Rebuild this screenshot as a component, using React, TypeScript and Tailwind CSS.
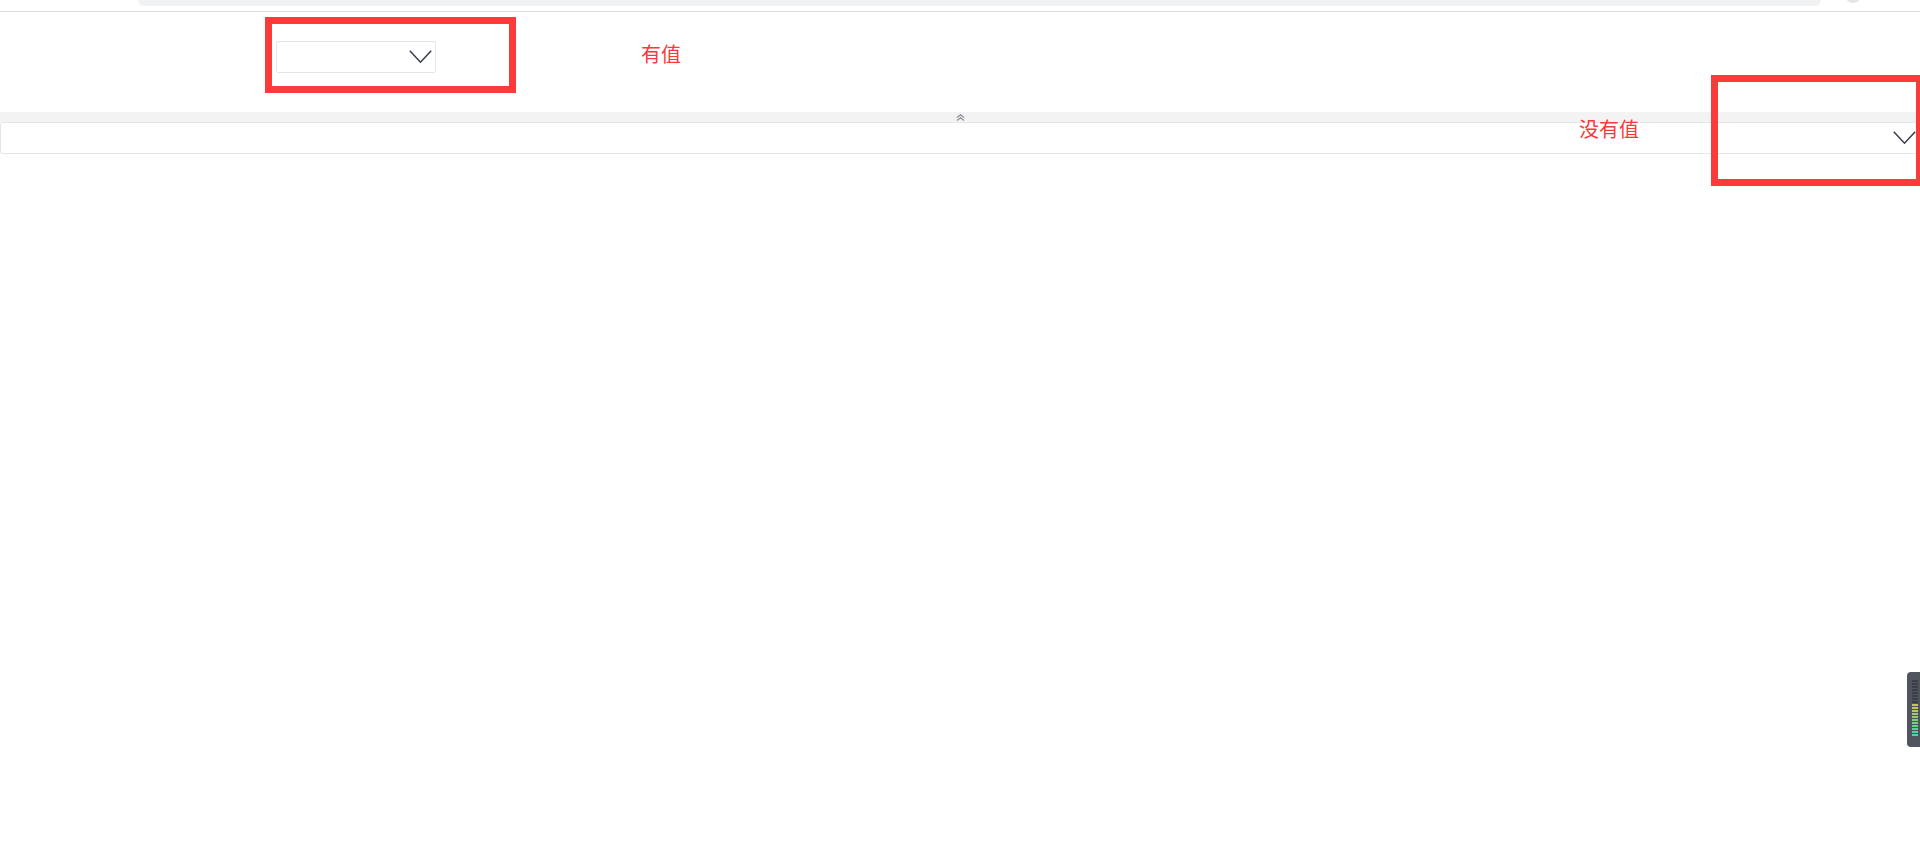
import React from "react";

function Chevron({ className }: { className?: string }) {
  return (
    <svg className={className} width="23" height="14" viewBox="0 0 23 14" fill="none">
      <polyline points="0.8,0.8 11.5,12.2 22.2,0.8" stroke="#3a4050" strokeWidth="1.6" strokeLinejoin="miter" />
    </svg>
  );
}

const bars = [
  "bg-[#3c3f48]", "bg-[#3c3f48]", "bg-[#3c3f48]", "bg-[#3c3f48]", "bg-[#3c3f48]",
  "bg-[#3c3f48]", "bg-[#3c3f48]", "bg-[#3c3f48]", "bg-[#c9c457]", "bg-[#c2c65a]",
  "bg-[#b4c85e]", "bg-[#a5c962]", "bg-[#95ca69]", "bg-[#86cc74]", "bg-[#74cd80]",
  "bg-[#66cf8e]", "bg-[#5ad09c]", "bg-[#50d1a8]", "bg-[#4ad2b2]",
];

export default function App() {
  return (
    <div className="relative min-h-screen w-full overflow-hidden bg-white" style={{ fontFamily: '"Noto Sans CJK SC", "Noto Sans", sans-serif' }}>
      {/* top strip */}
      <div className="flex h-[12px] items-start border-b border-[#dcdddf] pl-[138px]">
        <div className="h-[6px] w-[1683px] rounded-b-[14px] bg-[#f1f2f4]" />
        <div className="-mt-[13px] ml-[24px] h-[16px] w-[16px] rounded-full bg-[#e3e5e8]" />
      </div>

      {/* first row */}
      <div className="flex h-[100px] items-start pl-[276px]">
        <div className="mt-[29px] flex h-[32px] w-[160px] items-center justify-end rounded-[2px] border border-[#e6e6e8] pr-[3px]">
          <Chevron />
        </div>
        <div className="ml-[205px] mt-[32px] text-[20px] leading-[20px] text-[#f53a3c]">有值</div>
      </div>

      {/* collapse bar */}
      <div className="flex h-[10px] items-center justify-center bg-[#f2f3f2]">
        <svg width="9" height="7" viewBox="0 0 9 7" fill="none">
          <polyline points="1,3.5 4.5,0.8 8,3.5" stroke="#8a8f99" strokeWidth="1.2" />
          <polyline points="1,6.5 4.5,3.8 8,6.5" stroke="#8a8f99" strokeWidth="1.2" />
        </svg>
      </div>

      {/* wide select */}
      <div className="flex h-[32px] w-full items-center justify-end rounded-[2px] border border-[#e5e5ea] pr-[3px]">
        <Chevron />
      </div>

      {/* annotations */}
      <div className="pointer-events-none absolute left-[265px] top-[17px] h-[76px] w-[251px] border-[7px] border-[#fb3a3a]" />
      <div className="pointer-events-none absolute left-[1711px] top-[75px] h-[111px] w-[209px] border-[7px] border-r-[4px] border-[#fb3a3a]" />
      <div className="absolute left-[1579px] top-[119px] text-[20px] leading-[20px] text-[#f53a3c]">没有值</div>

      {/* side widget */}
      <div className="absolute right-0 top-[672px] flex h-[75px] w-[13px] justify-start rounded-l-[4px] bg-[#50545f] pl-[5px] pt-[8px]">
        <div className="flex flex-col gap-[1px]">
          {bars.map((c, i) => (
            <div key={i} className={`h-[2px] w-[6px] ${c}`} />
          ))}
        </div>
      </div>
    </div>
  );
}
